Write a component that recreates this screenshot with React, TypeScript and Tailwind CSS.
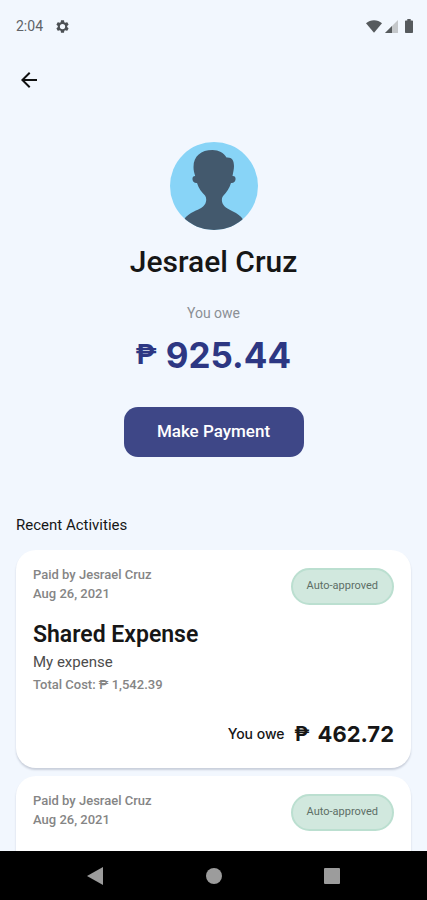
import type { ReactNode } from "react";

type Activity = {
  id: number;
  payer: string;
  date: string;
  status: string;
  expense?: {
    title: string;
    note: string;
    total: string;
    owed: string;
  };
};

const activities: Activity[] = [
  {
    id: 1,
    payer: "Jesrael Cruz",
    date: "Aug 26, 2021",
    status: "Auto-approved",
    expense: {
      title: "Shared Expense",
      note: "My expense",
      total: "1,542.39",
      owed: "462.72",
    },
  },
  {
    id: 2,
    payer: "Jesrael Cruz",
    date: "Aug 26, 2021",
    status: "Auto-approved",
  },
];

function StatusBar() {
  return (
    <div className="flex h-[52px] shrink-0 items-center justify-between pl-4 pr-[14px] text-[#5f6368]">
      <div className="flex items-center gap-3">
        <span className="text-[14px] leading-5">2:04</span>
        <svg viewBox="0 0 24 24" className="size-[15px] text-[#4c5054]" fill="currentColor" aria-hidden="true">
          <path d="M19.43 12.98c.04-.32.07-.64.07-.98s-.03-.66-.07-.98l2.11-1.65c.19-.15.24-.42.12-.64l-2-3.46c-.12-.22-.39-.3-.61-.22l-2.49 1c-.52-.4-1.08-.73-1.69-.98l-.38-2.65A.49.49 0 0 0 14 2h-4c-.25 0-.46.18-.49.42l-.38 2.65c-.61.25-1.17.59-1.69.98l-2.49-1c-.23-.09-.49 0-.61.22l-2 3.46c-.13.22-.07.49.12.64l2.11 1.65c-.04.32-.07.65-.07.98s.03.66.07.98l-2.11 1.65c-.19.15-.24.42-.12.64l2 3.46c.12.22.39.3.61.22l2.49-1c.52.4 1.08.73 1.69.98l.38 2.65c.03.24.24.42.49.42h4c.25 0 .46-.18.49-.42l.38-2.65c.61-.25 1.17-.59 1.69-.98l2.49 1c.23.09.49 0 .61-.22l2-3.46c.12-.22.07-.49-.12-.64l-2.11-1.65zM12 16.2a4.2 4.2 0 1 1 0-8.4 4.2 4.2 0 0 1 0 8.400z" />
        </svg>
      </div>
      <div className="flex items-center">
        <svg viewBox="0 0 16 13" className="h-[13px] w-4" fill="#565a5d" aria-hidden="true">
          <path d="M0 3.200C2.300 1.300 5 .3 8 .3s5.700 1 8 2.900L8 12.700z" />
        </svg>
        <svg viewBox="0 0 13 13" className="ml-[3px] size-[13px]" aria-hidden="true">
          <path d="M13 0v13H0z" fill="#c4c7ca" />
          <path d="M7 6v7H0z" fill="#565a5d" />
        </svg>
        <svg viewBox="0 0 8 14" className="ml-[7px] h-[14px] w-2" fill="#565a5d" aria-hidden="true">
          <path d="M2.300 0h3.400v1.500h1.500c.5 0 .8.300.8.800v10.900c0 .5-.3.800-.8.800H.8c-.5 0-.8-.3-.8-.8V2.300c0-.5.300-.8.800-.8h1.500z" />
        </svg>
      </div>
    </div>
  );
}

function Avatar() {
  return (
    <svg viewBox="0 0 88 88" className="size-[88px]" role="img" aria-label="Profile picture">
      <defs>
        <clipPath id="avatar-circle">
          <circle cx="44" cy="44" r="44" />
        </clipPath>
      </defs>
      <g clipPath="url(#avatar-circle)">
        <rect width="88" height="88" fill="#88d4f7" />
        <path
          fill="#43596d"
          d="M23.500 25C23.500 14 31 8 42.500 8c6.500 0 11 2.800 14 7.500 5.500-.5 7.500 3 7.500 8.500 0 3.500-.9 6.500-1.500 10 2.500-.2 3.300 1.500 3 3.500-.3 2.500-2 3.800-4.500 3.500-1.500 5-4.500 9.500-7.500 12.500-1.500 1.500-1.800 3.500-1.500 6 .8 5 6 7.500 11 10 4 2 8 4.500 10 8v12H14V77.500c2-3.500 6-6 10-8 5-2.500 11-4.500 12-10 .5-2.500.1-4.500-1-6-3-3-6.500-7-8-12.500-2.500.3-4.200-1-4.500-3.500-.2-2 .5-3.500 2.700-3.500-.9-3-1.700-5.500-1.700-9z"
        />
      </g>
    </svg>
  );
}

function ActivityCard({ activity }: { activity: Activity }) {
  const { payer, date, status, expense } = activity;
  return (
    <li className="min-h-[218px] rounded-[20px] bg-white px-[17px] pb-[19px] pt-[15px] shadow-[0_2px_2px_rgba(40,50,80,0.2)]">
      <div className="flex items-start justify-between">
        <div className="text-[13px] font-medium leading-[19px] text-[#858585]">
          <p>Paid by {payer}</p>
          <p>{date}</p>
        </div>
        <span className="mt-[3px] flex h-[37px] items-center rounded-full border-2 border-[#bbdfd0] bg-[#d1e8de] px-[14px] text-[11px] text-[#5d6e66]">
          {status}
        </span>
      </div>
      {expense && (
        <>
          <h3 className="mt-[15px] text-[23px] font-semibold leading-[30px] text-[#161616]">{expense.title}</h3>
          <p className="text-[15px] leading-6 text-[#4c4c4c]">{expense.note}</p>
          <p className="text-[13px] font-medium leading-[22px] text-[#858585]">Total Cost: ₱ {expense.total}</p>
          <p className="mt-[23px] flex items-center justify-end font-['Inter',sans-serif] leading-[30px] text-[#161616]">
            <span className="mr-[10px] text-[14px] font-medium">You owe</span>
            <span className="mr-2 font-['Roboto',sans-serif] text-[20px] font-bold">₱</span>
            <span className="text-[22px] font-bold">{expense.owed}</span>
          </p>
        </>
      )}
    </li>
  );
}

function NavButton({ label, children }: { label: string; children: ReactNode }) {
  return (
    <button type="button" aria-label={label} className="flex h-full w-12 items-center justify-center">
      <svg viewBox="0 0 18 18" className="size-[18px]" fill="#9c9c9c" aria-hidden="true">
        {children}
      </svg>
    </button>
  );
}

export default function App() {
  return (
    <div className="flex h-screen flex-col bg-[#f2f7fe] font-['Roboto',sans-serif]">
      <StatusBar />
      <main className="min-h-0 flex-1 overflow-hidden">
        <header className="flex h-14 items-center px-[9px]">
          <button type="button" aria-label="Back" className="flex size-10 items-center justify-center">
            <svg viewBox="0 0 24 24" className="size-6" fill="#111111" aria-hidden="true">
              <path d="M20 11H7.830l5.590-5.590L12 4l-8 8 8 8 1.410-1.410L7.830 13H20v-2z" />
            </svg>
          </button>
        </header>

        <section className="flex flex-col items-center pt-[34px]">
          <Avatar />
          <h1 className="mt-[14px] text-[30px] font-medium leading-9 text-[#161616]">Jesrael Cruz</h1>
          <p className="mt-[23px] text-[14px] leading-5 text-[#8b8f95]">You owe</p>
          <p className="mt-[10px] flex items-center gap-[9px] font-['Inter',sans-serif] font-bold leading-[44px] text-[#2d3783]">
            <span className="font-['Roboto',sans-serif] text-[28px]">₱</span>
            <span className="text-[35px]">925.44</span>
          </p>
          <button
            type="button"
            className="mt-[30px] h-[50px] w-[180px] rounded-[14px] bg-[#3e4787] text-[17px] font-medium text-white"
          >
            Make Payment
          </button>
        </section>

        <section className="px-4 pt-[58px]">
          <h2 className="text-[15px] leading-5 text-[#161616]">Recent Activities</h2>
          <ul className="mt-[15px] flex flex-col gap-2">
            {activities.map((activity) => (
              <ActivityCard key={activity.id} activity={activity} />
            ))}
          </ul>
        </section>
      </main>
      <nav className="flex h-[49px] shrink-0 items-center justify-evenly bg-black">
        <NavButton label="System back">
          <path d="M17 0v18L1 9z" />
        </NavButton>
        <NavButton label="Home">
          <circle cx="9" cy="9" r="8" />
        </NavButton>
        <NavButton label="Recent apps">
          <rect x="1" y="1" width="16" height="16" rx="1" />
        </NavButton>
      </nav>
    </div>
  );
}
